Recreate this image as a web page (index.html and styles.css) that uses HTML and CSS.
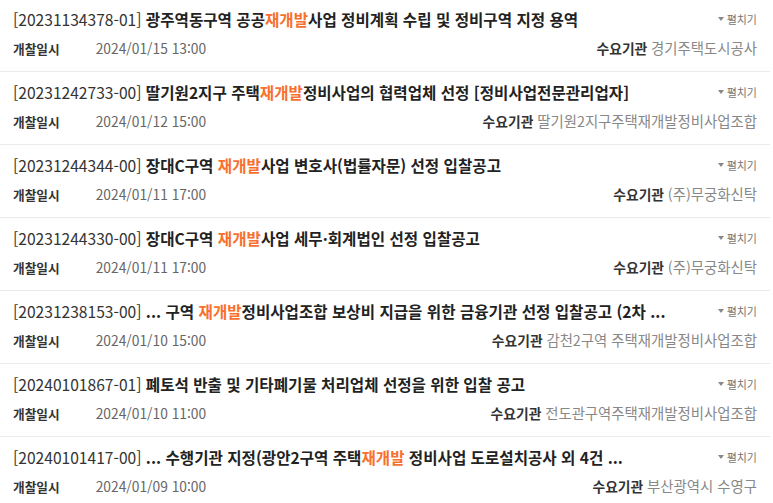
FILE: index.html
```html
<!DOCTYPE html>
<html lang="ko">
<head>
<meta charset="utf-8">
<link rel="stylesheet" href="styles.css">
</head>
<body>
<ul class="list">
  <li class="item">
    <div class="top">
      <p class="title"><span class="no">[20231134378-01]</span> 광주역동구역 공공<em>재개발</em>사업 정비계획 수립 및 정비구역 지정 용역</p>
      <span class="toggle"><i class="tri"></i>펼치기</span>
    </div>
    <div class="meta">
      <span class="date"><b>개찰일시</b><span class="val">2024/01/15 13:00</span></span>
      <span class="org"><b>수요기관</b> <span class="orgname">경기주택도시공사</span></span>
    </div>
  </li>
  <li class="item">
    <div class="top">
      <p class="title"><span class="no">[20231242733-00]</span> 딸기원2지구 주택<em>재개발</em>정비사업의 협력업체 선정 [정비사업전문관리업자]</p>
      <span class="toggle"><i class="tri"></i>펼치기</span>
    </div>
    <div class="meta">
      <span class="date"><b>개찰일시</b><span class="val">2024/01/12 15:00</span></span>
      <span class="org"><b>수요기관</b> <span class="orgname">딸기원2지구주택재개발정비사업조합</span></span>
    </div>
  </li>
  <li class="item">
    <div class="top">
      <p class="title"><span class="no">[20231244344-00]</span> 장대C구역 <em>재개발</em>사업 변호사(법률자문) 선정 입찰공고</p>
      <span class="toggle"><i class="tri"></i>펼치기</span>
    </div>
    <div class="meta">
      <span class="date"><b>개찰일시</b><span class="val">2024/01/11 17:00</span></span>
      <span class="org"><b>수요기관</b> <span class="orgname">(주)무궁화신탁</span></span>
    </div>
  </li>
  <li class="item">
    <div class="top">
      <p class="title"><span class="no">[20231244330-00]</span> 장대C구역 <em>재개발</em>사업 세무·회계법인 선정 입찰공고</p>
      <span class="toggle"><i class="tri"></i>펼치기</span>
    </div>
    <div class="meta">
      <span class="date"><b>개찰일시</b><span class="val">2024/01/11 17:00</span></span>
      <span class="org"><b>수요기관</b> <span class="orgname">(주)무궁화신탁</span></span>
    </div>
  </li>
  <li class="item">
    <div class="top">
      <p class="title"><span class="no">[20231238153-00]</span> ... 구역 <em>재개발</em>정비사업조합 보상비 지급을 위한 금융기관 선정 입찰공고 (2차 ...</p>
      <span class="toggle"><i class="tri"></i>펼치기</span>
    </div>
    <div class="meta">
      <span class="date"><b>개찰일시</b><span class="val">2024/01/10 15:00</span></span>
      <span class="org"><b>수요기관</b> <span class="orgname">감천2구역 주택재개발정비사업조합</span></span>
    </div>
  </li>
  <li class="item">
    <div class="top">
      <p class="title"><span class="no">[20240101867-01]</span> 폐토석 반출 및 기타폐기물 처리업체 선정을 위한 입찰 공고</p>
      <span class="toggle"><i class="tri"></i>펼치기</span>
    </div>
    <div class="meta">
      <span class="date"><b>개찰일시</b><span class="val">2024/01/10 11:00</span></span>
      <span class="org"><b>수요기관</b> <span class="orgname">전도관구역주택재개발정비사업조합</span></span>
    </div>
  </li>
  <li class="item">
    <div class="top">
      <p class="title"><span class="no">[20240101417-00]</span> ... 수행기관 지정(광안2구역 주택<em>재개발</em> 정비사업 도로설치공사 외 4건 ...</p>
      <span class="toggle"><i class="tri"></i>펼치기</span>
    </div>
    <div class="meta">
      <span class="date"><b>개찰일시</b><span class="val">2024/01/09 10:00</span></span>
      <span class="org"><b>수요기관</b> <span class="orgname">부산광역시 수영구</span></span>
    </div>
  </li>
</ul>
</body>
</html>
```

FILE: styles.css
```css
* { box-sizing: border-box; }
html, body { margin: 0; padding: 0; background: #fff; }
body {
  font-family: "Noto Sans CJK KR", "Noto Sans", sans-serif;
  color: #222;
  overflow: hidden;
}
.list {
  list-style: none;
  margin: -1px 0 0 0;
  padding: 0;
  width: 770px;
}
.item {
  height: 73px;
  padding: 9px 13px 0 13px;
  border-bottom: 1px solid #ebebeb;
}
.top {
  display: flex;
  align-items: center;
  justify-content: space-between;
  height: 22px;
}
.title {
  margin: 0;
  font-size: 15.6px;
  line-height: 22px;
  font-weight: 700;
  color: #222;
  white-space: nowrap;
}
.title .no { font-weight: 400; color: #333; }
.title em { font-style: normal; color: #f7702e; }
.toggle {
  display: flex;
  align-items: center;
  gap: 3px;
  font-size: 11px;
  color: #777;
  line-height: 14px;
}
.tri {
  display: block;
  width: 0;
  height: 0;
  border-left: 3.5px solid transparent;
  border-right: 3.5px solid transparent;
  border-top: 4px solid #888;
}
.meta {
  display: flex;
  align-items: center;
  justify-content: space-between;
  margin-top: 8px;
  height: 20px;
  font-size: 13.5px;
  line-height: 20px;
}
.date b { font-weight: 700; color: #333; font-size: 12.7px; }
.date .val { margin-left: 36px; color: #666; font-size: 13.8px; }
.org b { font-weight: 700; color: #333; font-size: 13.8px; }
.orgname { color: #888; font-size: 14.4px; }
```
